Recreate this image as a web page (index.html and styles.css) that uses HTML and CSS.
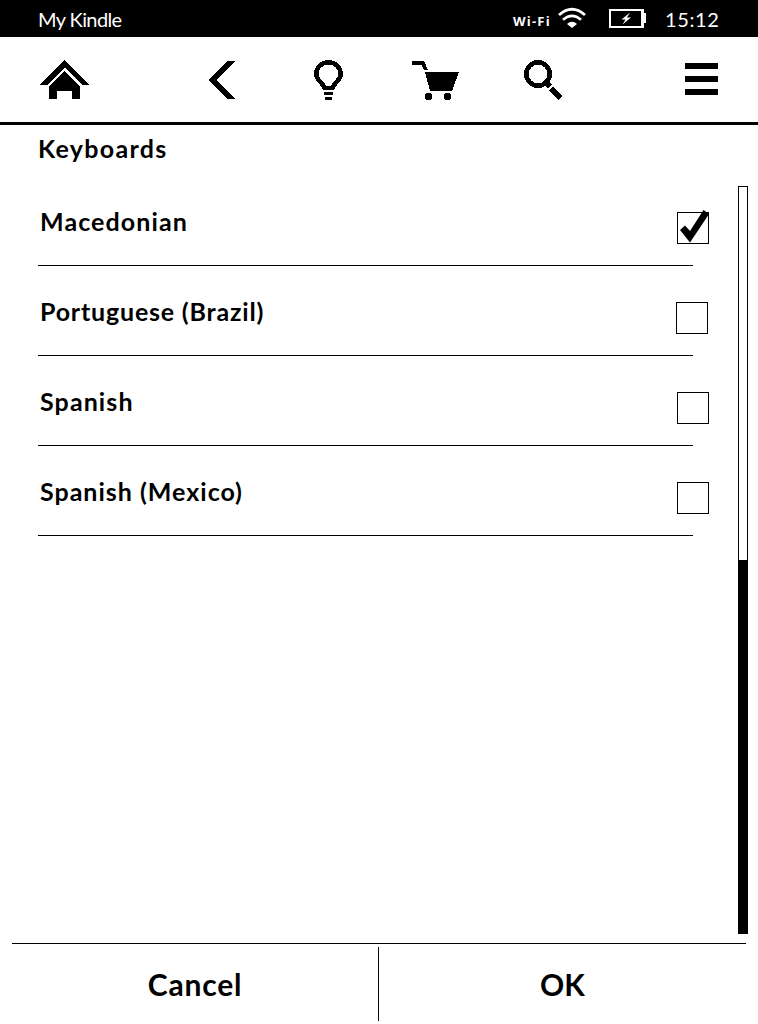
FILE: index.html
```html
<!DOCTYPE html>
<html lang="en">
<head>
<meta charset="utf-8">
<title>Keyboards</title>
<link rel="stylesheet" href="styles.css">
</head>
<body>
<div class="screen">
  <header class="status">
    <span class="device">My Kindle</span>
    <span class="wifi-label">Wi-Fi</span>
    <svg class="wifi" width="28" height="21" viewBox="0 0 28 21" fill="none" stroke="#fff" stroke-width="2.7">
      <path d="M1 8Q14-3.500 27 8M5 12.700Q14 5 23 12.700"/>
      <path d="M9 17Q14 12.500 19 17L14 21Z" fill="#fff" stroke="none"/>
    </svg>
    <svg class="battery" width="38" height="20" viewBox="0 0 38 20">
      <path d="M1 1H34V18H1Z" fill="none" stroke="#fff" stroke-width="2"/>
      <path d="M32 0h3v4h2v10h-2v5h-3z" fill="#fff"/>
      <path d="M21 3.5L12.5 10.5H16.5L13.5 15.5L22 8.5H18Z" fill="#fff"/>
    </svg>
    <span class="clock">15:12</span>
  </header>
  <nav class="toolbar">
    <svg class="home" width="50" height="40" viewBox="0 0 50 40" shape-rendering="crispEdges">
      <path d="M0 25L24.5 0L49 25H42L24.5 7.5L7 25Z"/>
      <path d="M24.5 11L40 26.5V39H32V31H17V39H9V26.5Z"/>
    </svg>
    <svg class="back" width="27" height="38" viewBox="0 0 27 38" shape-rendering="crispEdges">
      <path d="M18 0H26L7.500 19L26 38H18L0 19Z"/>
    </svg>
    <svg class="bulb" width="30" height="41" viewBox="0 0 30 41" shape-rendering="crispEdges">
      <path d="M10.500 27.800C9 23 2.300 20 2.300 14C2.300 7 8 2.300 14.500 2.300S26.700 7 26.700 14C26.700 20 20 23 18.500 27.800Z" fill="none" stroke="#000" stroke-width="4.500"/>
      <path d="M10 32h9v3h-9zM11 37h7v3h-7z"/>
    </svg>
    <svg class="cart" width="48" height="40" viewBox="0 0 48 40" shape-rendering="crispEdges">
      <path d="M0 0H12L16 9H12L9.500 4H0ZM13 11H47L40 30H18Z"/>
      <circle cx="16.500" cy="35.500" r="3.700"/><circle cx="35.500" cy="35.500" r="3.700"/>
    </svg>
    <svg class="search" width="39" height="41" viewBox="0 0 39 41" shape-rendering="crispEdges">
      <circle cx="14" cy="14" r="11.600" fill="none" stroke="#000" stroke-width="4.800"/>
      <path d="M20 25L24 21L27.500 24.500L24 28.500ZM25 30.500L29 26.500L38 36L34 40Z"/>
    </svg>
    <span class="menu"><i></i><i></i><i></i></span>
  </nav>
  <h1 class="title">Keyboards</h1>
  <main class="content">
    <ul class="list">
      <li class="row"><span class="name macedonian">Macedonian</span>
        <span class="box"><svg class="tick" width="32" height="34" viewBox="0 0 32 34"><path d="M3 20L8 15.500L13 21L26.500 0L32 4L13 32.500Z"/></svg></span></li>
      <li class="row"><span class="name portuguese">Portuguese (Brazil)</span><span class="box shifted"></span></li>
      <li class="row"><span class="name spanish">Spanish</span><span class="box"></span></li>
      <li class="row"><span class="name mexico">Spanish (Mexico)</span><span class="box"></span></li>
    </ul>
    <div class="track"><div class="thumb"></div></div>
  </main>
  <footer class="actions">
    <button class="action cancel">Cancel</button>
    <span class="divider"></span>
    <button class="action ok">OK</button>
  </footer>
</div>
</body>
</html>
```
FILE: styles.css
```css
* { box-sizing: border-box; }
body { margin: 0; background: #fff; color: #000; font-family: Lato, sans-serif; }
.screen { width: 758px; height: 1024px; display: flex; flex-direction: column; overflow: hidden; }
.status { height: 37px; flex: none; display: flex; align-items: flex-start; background: #000; color: #fff; padding-left: 38px; }
.status > * { flex: none; white-space: nowrap; }
.device { width: 475px; font-size: 20px; line-height: 24px; margin-top: 7px; letter-spacing: -0.6px; }
.wifi-label { width: 45px; font: bold 13px/18px "Open Sans", sans-serif; margin-top: 12px; letter-spacing: 1.2px; }
.wifi { margin-top: 7px; }
.battery { margin: 9px 0 0 23px; }
.clock { margin: 7px 0 0 18px; font-size: 20px; line-height: 24px; letter-spacing: 0.6px; }
.toolbar { height: 88px; flex: none; display: flex; align-items: flex-start; border-bottom: 3px solid #000; padding: 23px 0 0 40px; }
.toolbar > * { flex: none; }
.back { margin: 1px 0 0 119px; }
.bulb { margin-left: 78px; }
.cart { margin: 1px 0 0 68px; }
.search { margin-left: 64px; }
.menu { width: 33px; margin: 3px 0 0 122px; display: flex; flex-direction: column; gap: 7px; }
.menu i { height: 6px; background: #000; }
.title { height: 61px; flex: none; margin: 0; padding: 8px 0 0 38px; font-size: 25px; line-height: 30px; letter-spacing: 1.3px; }
.content { height: 748px; flex: none; display: flex; justify-content: space-between; padding: 0 10px 0 38px; }
.list { width: 671px; margin: 0; padding: 0; list-style: none; }
.row { height: 90px; display: flex; justify-content: space-between; align-items: flex-start; padding: 26px 0 0 2px; background: linear-gradient(#000, #000) 0 100% / 655px 1px no-repeat; }
.row:first-child { height: 80px; }
.row + .row { padding-top: 36px; }
.name { font-size: 25px; font-weight: bold; line-height: 30px; margin-top: -6px; white-space: nowrap; }
.macedonian { letter-spacing: 1.1px; }
.portuguese { letter-spacing: 0.8px; }
.spanish { letter-spacing: 1.1px; }
.mexico { letter-spacing: 1px; }
.box { width: 32px; height: 32px; border: 1px solid #000; position: relative; }
.shifted { margin-right: 1px; }
.tick { position: absolute; left: -1px; top: -3px; }
.track { width: 10px; border: 1px solid #000; display: flex; flex-direction: column; justify-content: flex-end; }
.thumb { height: 373px; background: #000; }
.actions { height: 81px; margin: 9px 12px 0; flex: none; display: flex; align-items: flex-start; border-top: 1px solid #000; padding-top: 3px; }
.action { border: 0; padding: 0; background: none; color: #000; font: bold 30px/36px Lato, sans-serif; margin-top: 19px; }
.cancel { width: 366px; letter-spacing: 0.8px; }
.divider { width: 1px; height: 74px; background: #000; }
.ok { width: 367px; }
```
